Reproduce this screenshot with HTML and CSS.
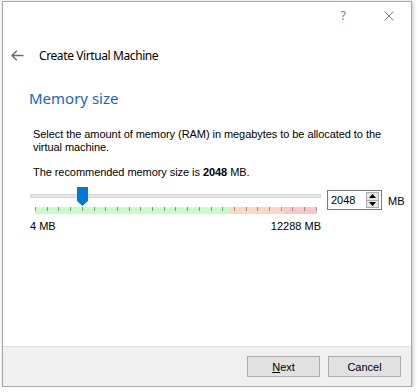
FILE: index.html
```html
<!DOCTYPE html>
<html>
<head>
<meta charset="utf-8">
<link rel="stylesheet" href="styles.css">
</head>
<body>
<div class="window">
  <div class="titlebar">
    <span class="help">?</span>
    <svg class="close" width="10" height="10" viewBox="0 0 10 10"><path d="M0.5 0.5L9.5 9.5M9.5 0.5L0.5 9.5" stroke="#7a7a7a" stroke-width="1" fill="none"/></svg>
  </div>
  <div class="header">
    <svg class="back" width="13" height="11" viewBox="0 0 13 11"><path d="M1 5.5H12.5M5.8 0.7L1 5.5L5.8 10.3" stroke="#6b6b6b" stroke-width="1.4" fill="none"/></svg>
    <span class="header-title">Create Virtual Machine</span>
  </div>
  <div class="main">
    <h1 class="page-title">Memory size</h1>
    <div class="body-text">
      <p class="desc">Select the amount of memory (RAM) in megabytes to be allocated to the virtual machine.</p>
      <p class="recommend">The recommended memory size is <b>2048</b> MB.</p>
    </div>
    <div class="slider-row">
      <div class="slider">
        <div class="track"></div>
        <div class="band">
          <span></span><span></span><span></span><span></span><span></span>
          <span></span><span></span><span></span><span></span><span></span>
          <span></span><span></span><span></span><span></span><span></span>
          <span></span><span></span><span></span><span></span><span></span>
          <span></span><span></span><span></span><span></span><span></span>
        </div>
        <div class="thumb"></div>
      </div>
      <div class="spinbox">
        <span class="spin-value">2048</span>
        <div class="spin-buttons">
          <div class="spin-btn"><svg width="7" height="4" viewBox="0 0 7 4"><path d="M0 4L3.5 0L7 4Z" fill="#000"/></svg></div>
          <div class="spin-btn"><svg width="7" height="4" viewBox="0 0 7 4"><path d="M0 0L3.5 4L7 0Z" fill="#000"/></svg></div>
        </div>
      </div>
      <span class="unit">MB</span>
    </div>
    <div class="range-labels">
      <span>4 MB</span>
      <span>12288 MB</span>
    </div>
  </div>
  <div class="footer">
    <button class="btn"><u>N</u>ext</button>
    <button class="btn">Cancel</button>
  </div>
</div>
</body>
</html>
```
FILE: styles.css
```css
html, body {
  margin: 0;
  padding: 0;
  background: #ffffff;
}
body {
  padding: 1px 0 0 2px;
  font-family: "Liberation Sans", Arial, sans-serif;
  font-size: 11px;
  color: #000;
}
.window {
  width: 408px;
  height: 384px;
  border: 1px solid #a6a6a6;
  background: #fff;
  box-shadow: 1px 1px 4px rgba(0,0,0,0.25);
  display: flex;
  flex-direction: column;
}
.titlebar {
  height: 41px;
  box-sizing: border-box;
  padding: 9px 17px 0 0;
  display: flex;
  justify-content: flex-end;
  align-items: flex-start;
}
.help {
  font-family: "Noto Sans", sans-serif;
  font-size: 12px;
  line-height: 10px;
  color: #7a7a7a;
  margin-right: 38px;
}
.close {
  display: block;
  margin-top: 0;
}
.header {
  height: 24px;
  display: flex;
  align-items: center;
  padding-left: 8px;
}
.back {
  display: block;
  margin-right: 15px;
}
.header-title {
  font-family: "Noto Sans", sans-serif;
  font-size: 12px;
  letter-spacing: -0.4px;
  color: #000;
}
.main {
  flex: 1;
  padding-left: 26px;
}
.page-title {
  margin: 21px 0 0 0;
  font-family: "Noto Sans", sans-serif;
  font-weight: normal;
  font-size: 15px;
  line-height: 20px;
  color: #1a63c9;
}
.body-text {
  padding-left: 4px;
  letter-spacing: -0.06px;
}
.desc {
  margin: 20px 0 0 0;
  line-height: 13px;
  width: 360px;
}
.recommend {
  margin: 12px 0 0 0;
  line-height: 13px;
}
.slider-row {
  margin-top: 7px;
  display: flex;
  align-items: flex-start;
  padding-left: 1px;
}
.slider {
  position: relative;
  width: 291px;
  height: 28px;
}
.track {
  margin-top: 8px;
  height: 4px;
  background: #e6e6e6;
  box-shadow: inset 0 0 0 1px #d8d8d8;
}
.band {
  margin: 9px 0 0 5px;
  width: 282px;
  height: 7px;
  background: linear-gradient(to right, #c6fcc6 0, #c6fcc6 195px, #ffd6c2 195px, #ffd6c2 249px, #ffc4c4 249px, #ffc4c4 100%);
  display: flex;
  justify-content: space-between;
  align-items: flex-start;
}
.band span {
  width: 1px;
  height: 4px;
  background: #8e8e8e;
}
.thumb {
  position: absolute;
  left: 47px;
  top: 1px;
  width: 11px;
  height: 19px;
  background: #0078d7;
  clip-path: polygon(0 0, 100% 0, 100% 74%, 50% 100%, 0 74%);
}
.spinbox {
  margin: 4px 0 0 6px;
  width: 55px;
  height: 20px;
  box-sizing: border-box;
  border: 1px solid #7a7a7a;
  display: flex;
  align-items: center;
  justify-content: space-between;
  padding: 0 2px 0 3px;
}
.spin-value {
  line-height: 13px;
}
.spin-buttons {
  display: flex;
  flex-direction: column;
  width: 13px;
  height: 16px;
}
.spin-btn {
  flex: 1;
  background: #e6e6e6;
  border: 1px solid #adadad;
  display: flex;
  align-items: center;
  justify-content: center;
}
.spin-btn + .spin-btn {
  border-top: none;
}
.spin-btn svg {
  display: block;
}
.unit {
  margin: 9px 0 0 6px;
  line-height: 13px;
}
.range-labels {
  margin-top: 6px;
  width: 291px;
  display: flex;
  justify-content: space-between;
  line-height: 13px;
  padding-left: 1px;
}
.footer {
  height: 40px;
  box-sizing: border-box;
  border-top: 1px solid #dfdfdf;
  background: #f0f0f0;
  display: flex;
  justify-content: flex-end;
  align-items: flex-start;
  padding: 9px 10px 0 0;
  gap: 8px;
}
.btn {
  width: 73px;
  height: 21px;
  margin: 0;
  padding: 0;
  background: #e1e1e1;
  border: 1px solid #adadad;
  font-family: "Liberation Sans", Arial, sans-serif;
  font-size: 11px;
  color: #000;
}
```
